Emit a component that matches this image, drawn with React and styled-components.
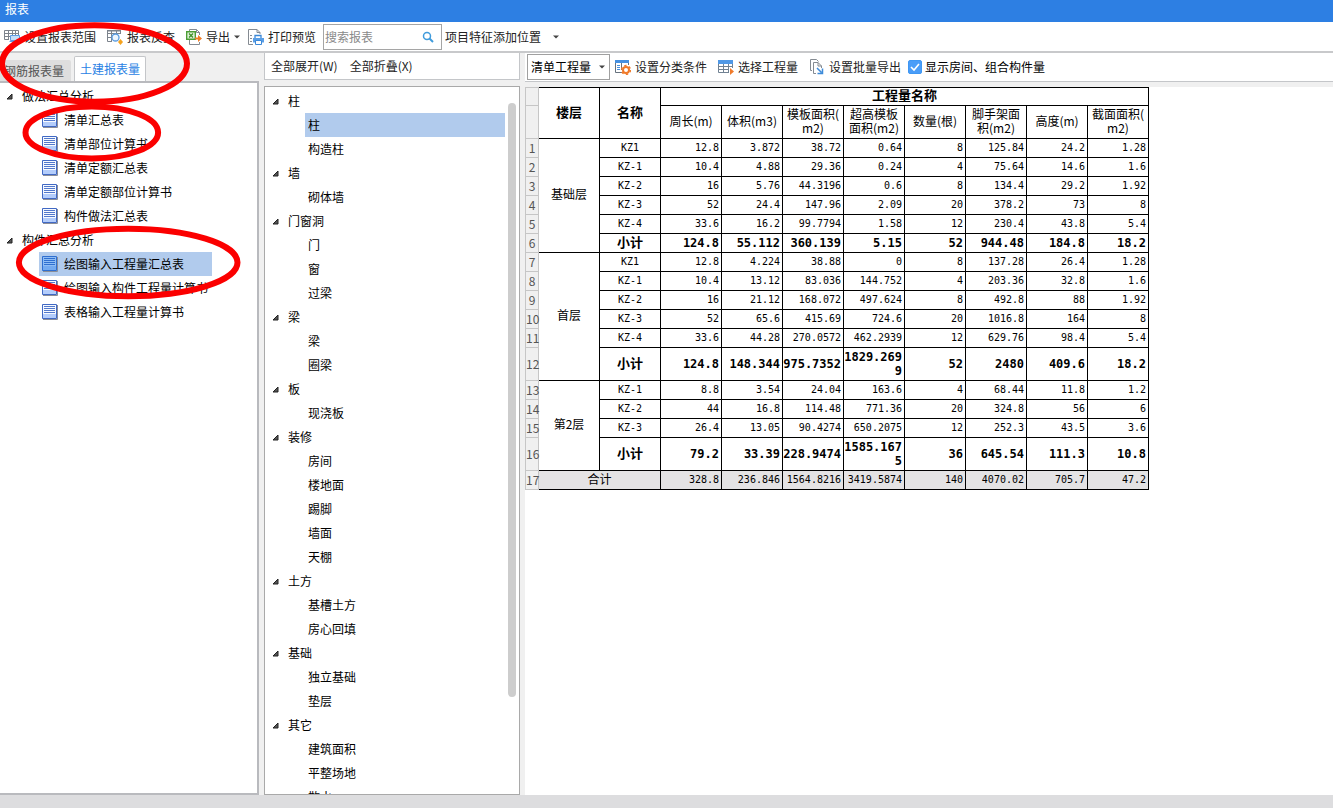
import React, { useState } from 'react'
import styled, { createGlobalStyle } from 'styled-components'

const reportTree = [
  { title: '做法汇总分析', items: ['清单汇总表', '清单部位计算书', '清单定额汇总表', '清单定额部位计算书', '构件做法汇总表'] },
  { title: '构件汇总分析', items: ['绘图输入工程量汇总表', '绘图输入构件工程量计算书', '表格输入工程量计算书'] },
]

const partTree = [
  { title: '柱', items: ['柱', '构造柱'] },
  { title: '墙', items: ['砌体墙'] },
  { title: '门窗洞', items: ['门', '窗', '过梁'] },
  { title: '梁', items: ['梁', '圈梁'] },
  { title: '板', items: ['现浇板'] },
  { title: '装修', items: ['房间', '楼地面', '踢脚', '墙面', '天棚'] },
  { title: '土方', items: ['基槽土方', '房心回填'] },
  { title: '基础', items: ['独立基础', '垫层'] },
  { title: '其它', items: ['建筑面积', '平整场地', '散水'] },
]

const columns = ['周长(m)', '体积(m3)', '模板面积(\nm2)', '超高模板\n面积(m2)', '数量(根)', '脚手架面\n积(m2)', '高度(m)', '截面面积(\nm2)']

const floors = [
  {
    name: '基础层',
    rows: [
      ['KZ1', '12.8', '3.872', '38.72', '0.64', '8', '125.84', '24.2', '1.28'],
      ['KZ-1', '10.4', '4.88', '29.36', '0.24', '4', '75.64', '14.6', '1.6'],
      ['KZ-2', '16', '5.76', '44.3196', '0.6', '8', '134.4', '29.2', '1.92'],
      ['KZ-3', '52', '24.4', '147.96', '2.09', '20', '378.2', '73', '8'],
      ['KZ-4', '33.6', '16.2', '99.7794', '1.58', '12', '230.4', '43.8', '5.4'],
      ['小计', '124.8', '55.112', '360.139', '5.15', '52', '944.48', '184.8', '18.2'],
    ],
  },
  {
    name: '首层',
    rows: [
      ['KZ1', '12.8', '4.224', '38.88', '0', '8', '137.28', '26.4', '1.28'],
      ['KZ-1', '10.4', '13.12', '83.036', '144.752', '4', '203.36', '32.8', '1.6'],
      ['KZ-2', '16', '21.12', '168.072', '497.624', '8', '492.8', '88', '1.92'],
      ['KZ-3', '52', '65.6', '415.69', '724.6', '20', '1016.8', '164', '8'],
      ['KZ-4', '33.6', '44.28', '270.0572', '462.2939', '12', '629.76', '98.4', '5.4'],
      ['小计', '124.8', '148.344', '975.7352', '1829.2699', '52', '2480', '409.6', '18.2'],
    ],
  },
  {
    name: '第2层',
    rows: [
      ['KZ-1', '8.8', '3.54', '24.04', '163.6', '4', '68.44', '11.8', '1.2'],
      ['KZ-2', '44', '16.8', '114.48', '771.36', '20', '324.8', '56', '6'],
      ['KZ-3', '26.4', '13.05', '90.4274', '650.2075', '12', '252.3', '43.5', '3.6'],
      ['小计', '79.2', '33.39', '228.9474', '1585.1675', '36', '645.54', '111.3', '10.8'],
    ],
  },
]

const totals = ['328.8', '236.846', '1564.8216', '3419.5874', '140', '4070.02', '705.7', '47.2']

/* ICONS */
const RangeIcon = () => (
  <Icon viewBox="0 0 16 16">
    <path d="M5 10.5H.5v-9h14V6M0 4.5h15M0 7.5h6M4.5 1v9.5M8.5 1v5M11.500 1v5" fill="none" stroke="#7c838c" />
    <path d="M6.500 6.500h9v5h-9z" fill="#c6def8" stroke="#5d9de4" />
    <path d="M5.500 12.500h9" stroke="#5d9de4" />
  </Icon>
)
const LookupIcon = () => (
  <Icon viewBox="0 0 16 16">
    <path d="M5 12.5H.5V1.500h13V5M.5 4.500h13M.5 8.500h4M4.500 1v11.500M9.500 1v4" fill="none" stroke="#7c838c" />
    <path d="M0 1h14v1.500H0z" fill="#7c838c" />
    <circle cx="8.500" cy="8.500" r="3.500" fill="#eef6ff" stroke="#5a9ce0" strokeWidth="1.300" />
    <path d="M13.500 10l2.500 3-2.500 3-2.500-3z" fill="#f5a21d" />
  </Icon>
)
const ExportIcon = () => (
  <Icon viewBox="0 0 16 16">
    <path d="M3.500 3V.5h7l3 3V6M3.500 11v4.500h10V13" fill="none" stroke="#858b92" />
    <path d="M10.500.5v3h3" fill="none" stroke="#858b92" />
    <path d="M.7 2.700h8.600v7.600H.7z" fill="#e5f3df" stroke="#4c9d35" strokeWidth="1.400" />
    <path d="M3 4.500l4 4M7 4.500l-4 4" stroke="#3f9229" strokeWidth="1.400" />
    <path d="M9 8.500h3V6l4 3.500-4 3.500v-2.500H9z" fill="#f07c25" />
  </Icon>
)
const PrintIcon = () => (
  <Icon viewBox="0 0 16 16">
    <path d="M5 15.500H.5V.5H9l3 3V5M9 .5v3h3" fill="none" stroke="#858b92" />
    <path d="M2 6.500h2M2 9.500h2M2 12.500h2" stroke="#858b92" />
    <path d="M7 9V6.500h6V9" fill="#fff" stroke="#3b88d8" strokeWidth="1.300" />
    <path d="M5 9h11v4.500H5z" fill="#5b9fe6" />
    <path d="M7.500 11.500h6v4h-6z" fill="#fff" stroke="#3b88d8" />
  </Icon>
)
const ClassifyIcon = () => (
  <Icon viewBox="0 0 16 16">
    <path d="M7 13.500H.5V1.500h13V6M6.500 4v7" fill="none" stroke="#67727e" />
    <path d="M0 1h14v3H0z" fill="#4690e0" />
    <path d="M2 6.500h3M2 8.500h3M2 10.500h3" stroke="#4690e0" />
    <circle cx="11" cy="11" r="3" fill="#fff" stroke="#f07a2a" strokeWidth="2" />
    <circle cx="11" cy="11" r="4.500" fill="none" stroke="#f07a2a" strokeWidth="1.400" strokeDasharray="2.360 2.360" />
  </Icon>
)
const GridIcon = () => (
  <Icon viewBox="0 0 16 16">
    <path d="M.5 3.500h14v10H.5zM.5 7.500h14M.5 10.500h14M5.500 4v9.500M10.500 4v9.500" fill="#fff" stroke="#718293" />
    <path d="M0 1h15v4H0z" fill="#4f98e6" />
    <path d="M11 9h5v7h-5z" fill="#fff" />
    <path d="M12 9l4 3.500-4 3.500z" fill="#f07a2a" />
  </Icon>
)
const BatchIcon = () => (
  <Icon viewBox="0 0 16 16">
    <path d="M3 11.500H1.500V.5h6l2 2" fill="none" stroke="#858b92" />
    <path d="M7 14.500H4.500v-11H9l3.500 3.500v2" fill="none" stroke="#858b92" />
    <path d="M9 3.500V7h3.500" fill="none" stroke="#858b92" />
    <path d="M8 9l4.500 4.500M13.500 9.500v5h-5" fill="none" stroke="#3c8ad9" strokeWidth="1.500" />
  </Icon>
)
const SheetIcon = ({ active }) => (
  <Icon viewBox="0 0 16 16">
    <path d="M1 15.500h14.500V1" fill="none" stroke="#8b8e98" />
    <path d="M.5.5h14v14H.5z" fill={active ? '#8fbdf4' : '#f7faff'} stroke={active ? '#2f6fd0' : '#4169c4'} />
    <path d="M1 10h13v4H1z" fill={active ? '#74aaf0' : '#b4cdfb'} />
    <path d="M2 2.500h11M2 4.500h11M2 6.500h11M2 8.500h11" stroke={active ? '#2f6fd0' : '#5379cc'} />
  </Icon>
)
const Caret = () => (
  <CaretIcon viewBox="0 0 6 4"><path d="M0 .5h6L3 3.500z" fill="#444" /></CaretIcon>
)
const Fold = () => (
  <FoldIcon viewBox="0 0 7 7"><path d="M6 1v5H1z" fill="#555" stroke="#222" /></FoldIcon>
)

const Tree = ({ data, selected, onSelect, withIcon }) => (
  <TreeList $fit={withIcon}>
    {data.map((group) => (
      <li key={group.title}>
        <GroupRow $inset={withIcon ? 6 : 7}><Fold />{group.title}</GroupRow>
        <ItemList $indent={withIcon ? 39 : 40}>
          {group.items.map((item) => (
            <li key={item}>
              <ItemRow $active={selected === item} onClick={() => onSelect(item)}>
                {withIcon && <SheetIcon active={selected === item} />}
                {item}
              </ItemRow>
            </li>
          ))}
        </ItemList>
      </li>
    ))}
  </TreeList>
)

const QuantityTable = () => {
  let count = 0
  return (
    <Table>
      <colgroup>
        <Col $w={14} />
        <Col $w={61} />
        <Col $w={61} />
        {columns.map((c) => <Col key={c} $w={61} />)}
      </colgroup>
      <thead>
        <Row>
          <RowNo $top />
          <HeadCell $top $strong rowSpan={2}>楼层</HeadCell>
          <HeadCell $top $strong rowSpan={2}>名称</HeadCell>
          <HeadCell $top $strong colSpan={8}>工程量名称</HeadCell>
        </Row>
        <Row $tall>
          <RowNo />
          {columns.map((c) => <HeadCell key={c}>{c}</HeadCell>)}
        </Row>
      </thead>
      <tbody>
        {floors.map((floor) => floor.rows.map(([name, ...values], i) => {
          const bold = name === '小计'
          count += 1
          return (
            <Row key={floor.name + name} $tall={values.some((v) => bold && v.length > 8)}>
              <RowNo>{count}</RowNo>
              {i === 0 && <LabelCell rowSpan={floor.rows.length}>{floor.name}</LabelCell>}
              {bold ? <LabelCell $bold>{name}</LabelCell> : <CodeCell>{name}</CodeCell>}
              {values.map((v, n) => <NumCell key={n} $bold={bold}>{v}</NumCell>)}
            </Row>
          )
        }))}
        <Row $total>
          <RowNo>{count + 1}</RowNo>
          <LabelCell colSpan={2}>合计</LabelCell>
          {totals.map((v, n) => <NumCell key={n}>{v}</NumCell>)}
        </Row>
      </tbody>
    </Table>
  )
}

const App = () => {
  const [report, setReport] = useState('绘图输入工程量汇总表')
  const [part, setPart] = useState('柱')
  const [tab, setTab] = useState('土建报表量')
  const [showRooms, setShowRooms] = useState(true)

  return (
    <Window>
      <GlobalStyle />
      <TitleBar>报表</TitleBar>
      <MainToolbar>
        <ToolButton><RangeIcon />设置报表范围</ToolButton>
        <ToolButton><LookupIcon />报表反查</ToolButton>
        <ToolButton $menu><ExportIcon />导出<Caret /></ToolButton>
        <ToolButton><PrintIcon />打印预览</ToolButton>
        <SearchBox>
          <input type="text" placeholder="搜索报表" aria-label="搜索报表" />
          <SearchIcon viewBox="0 0 12 12">
            <circle cx="5" cy="5" r="3.500" fill="none" stroke="#3f9bdc" strokeWidth="1.500" />
            <path d="M7.500 7.500l3.500 3.500" stroke="#3f9bdc" strokeWidth="2" />
          </SearchIcon>
        </SearchBox>
        <ToolButton $wide>项目特征添加位置<Caret /></ToolButton>
      </MainToolbar>

      <Body>
        <Side>
          <Tabs>
            {['钢筋报表量', '土建报表量'].map((t) => (
              <Tab key={t} $active={tab === t} onClick={() => setTab(t)}>{t}</Tab>
            ))}
          </Tabs>
          <ReportPanel>
            <Tree data={reportTree} selected={report} onSelect={setReport} withIcon />
          </ReportPanel>
        </Side>

        <Middle>
          <FoldBar>
            <FoldButton>全部展开(W)</FoldButton>
            <FoldButton>全部折叠(X)</FoldButton>
          </FoldBar>
          <PartPanel>
            <Tree data={partTree} selected={part} onSelect={setPart} />
            <ScrollTrack><ScrollThumb /></ScrollTrack>
          </PartPanel>
        </Middle>

        <Content>
          <TableToolbar>
            <SelectBox>
              <select aria-label="工程量类型" defaultValue="清单工程量">
                <option>清单工程量</option>
              </select>
              <Caret />
            </SelectBox>
            <ToolButton><ClassifyIcon />设置分类条件</ToolButton>
            <ToolButton><GridIcon />选择工程量</ToolButton>
            <ToolButton><BatchIcon />设置批量导出</ToolButton>
            <CheckLabel>
              <input type="checkbox" checked={showRooms} onChange={(e) => setShowRooms(e.target.checked)} />
              显示房间、组合构件量
            </CheckLabel>
          </TableToolbar>
          <Sheet><QuantityTable /></Sheet>
        </Content>
      </Body>
      <StatusBar />

      <Marks viewBox="0 0 260 310">
        <ellipse cx="94.500" cy="63.500" rx="92.500" ry="38.300" />
        <ellipse cx="91.800" cy="132.400" rx="66.300" ry="26" />
        <ellipse cx="128.200" cy="262.500" rx="109.300" ry="33.700" />
      </Marks>
    </Window>
  )
}

export default App

const GlobalStyle = createGlobalStyle`
*{
  box-sizing: border-box;
}
body{
  margin: 0;
  font-family: "Noto Sans CJK SC", sans-serif;
  font-size: 12px;
  line-height: 16px;
  color: #000;
}
button, input, select{
  font: inherit;
  color: inherit;
}
ul{
  list-style: none;
  margin: 0;
  padding: 0;
}
`

const Window = styled.div`
  position: relative;
  display: flex;
  flex-direction: column;
  height: 100vh;
  overflow: hidden;
  background: #f0f0f0;
`

const TitleBar = styled.header`
  flex: none;
  height: 22px;
  padding: 0 5px;
  line-height: 17px;
  background: #2d7fe3;
  color: #fff;
`

const Icon = styled.svg`
  flex: none;
  width: 16px;
  height: 16px;
`

const CaretIcon = styled.svg`
  flex: none;
  width: 6px;
  height: 4px;
`

const FoldIcon = styled.svg`
  flex: none;
  width: 7px;
  height: 7px;
`

const MainToolbar = styled.div`
  flex: none;
  display: flex;
  align-items: center;
  height: 31px;
  border-bottom: 2px solid #c8c9cb;
  background: #fff;
`

const ToolButton = styled.button`
  display: flex;
  align-items: center;
  gap: ${({ $wide }) => ($wide ? 12 : 4)}px;
  height: 22px;
  padding: 0 ${({ $menu, $wide }) => ($menu || $wide ? 4 : 7)}px 0 ${({ $wide }) => ($wide ? 3 : 4)}px;
  border: none;
  background: none;
  color: #222;
  white-space: nowrap;
  cursor: pointer;
`

const SearchBox = styled.div`
  display: flex;
  align-items: center;
  width: 119px;
  height: 26px;
  padding: 0 7px 0 1px;
  border: 1px solid #a5a5a5;
  background: #fff;
  input{
    flex: 1;
    min-width: 0;
    padding: 0;
    border: none;
    outline: none;
  }
  input::placeholder{
    color: #8a8a8a;
  }
`

const SearchIcon = styled.svg`
  flex: none;
  width: 12px;
  height: 12px;
`

const Body = styled.main`
  flex: 1;
  min-height: 0;
  display: grid;
  grid-template-columns: 259px 256px 1fr;
  grid-template-rows: 100%;
  column-gap: 5px;
`

const Side = styled.section`
  display: flex;
  flex-direction: column;
`

const Tabs = styled.div`
  display: flex;
  align-items: flex-end;
  gap: 3px;
  height: 28px;
`

const Tab = styled.button`
  height: ${({ $active }) => ($active ? 25 : 21)}px;
  padding: 0 ${({ $active }) => ($active ? 5 : 7)}px 0 ${({ $active }) => ($active ? 5 : 4)}px;
  border: ${({ $active }) => ($active ? '1px solid #c4c6c9' : 'none')};
  border-bottom: none;
  border-radius: 2px 2px 0 0;
  background: ${({ $active }) => ($active ? '#fff' : '#dedede')};
  color: ${({ $active }) => ($active ? '#2a82e4' : '#555')};
  cursor: pointer;
`

const ReportPanel = styled.div`
  flex: 1;
  min-height: 0;
  padding-top: 1px;
  overflow: hidden;
  border: 2px solid #b9babe;
  border-left: none;
  background: #fff;
`

const TreeList = styled.ul`
  flex: 1;
  width: ${({ $fit }) => ($fit ? 'max-content' : 'auto')};
`

const GroupRow = styled.div`
  display: flex;
  align-items: center;
  gap: 9px;
  height: 24px;
  padding-left: ${({ $inset }) => $inset}px;
`

const ItemList = styled.ul`
  padding-left: ${({ $indent }) => $indent}px;
`

const ItemRow = styled.button`
  display: flex;
  align-items: center;
  gap: 6px;
  width: 100%;
  height: 24px;
  padding: 0 4px 0 3px;
  border: none;
  background: ${({ $active }) => ($active ? '#b1cbed' : 'none')};
  text-align: left;
  white-space: nowrap;
  cursor: pointer;
`

const Middle = styled.section`
  display: flex;
  flex-direction: column;
  gap: 6px;
  min-height: 0;
`

const FoldBar = styled.div`
  flex: none;
  display: flex;
  align-items: center;
  gap: 4px;
  height: 27px;
  padding: 0 2px;
  border: 1px solid #c4c6c9;
  border-top: none;
  background: #fff;
`

const FoldButton = styled.button`
  height: 20px;
  padding: 0 4px;
  border: none;
  background: none;
  color: #222;
  cursor: pointer;
`

const PartPanel = styled.div`
  flex: 1;
  min-height: 0;
  display: flex;
  gap: 3px;
  padding: 2px 3px 0 0;
  overflow: hidden;
  border: 1px solid #a9a9a9;
  background: #fff;
`

const ScrollTrack = styled.div`
  width: 8px;
  padding-top: 14px;
`

const ScrollThumb = styled.div`
  height: 86%;
  border-radius: 4px;
  background: #cdcdcd;
`

const Content = styled.section`
  display: flex;
  flex-direction: column;
  gap: 5px;
  min-width: 0;
`

const TableToolbar = styled.div`
  flex: none;
  display: flex;
  align-items: center;
  height: 29px;
  padding-left: 2px;
  border-bottom: 1px solid #c4c6c9;
  background: #fff;
`

const SelectBox = styled.div`
  position: relative;
  width: 83px;
  height: 26px;
  margin-right: 1px;
  select{
    width: 100%;
    height: 100%;
    padding: 0 16px 0 3px;
    border: 1px solid #a0a0a0;
    border-radius: 0;
    background: #fff;
    appearance: none;
  }
  svg{
    position: absolute;
    right: 5px;
    top: 11px;
    pointer-events: none;
  }
`

const CheckLabel = styled.label`
  display: flex;
  align-items: center;
  gap: 3px;
  white-space: nowrap;
  input{
    appearance: none;
    width: 14px;
    height: 14px;
    margin: 0;
    border-radius: 2px;
    border: 1px solid #3f97f3;
  }
  input:checked{
    background: #4a9df8 url("data:image/svg+xml,%3Csvg xmlns='http://www.w3.org/2000/svg' viewBox='0 0 12 12'%3E%3Cpath d='M2 6l3 3 5-6' fill='none' stroke='white' stroke-width='1.6'/%3E%3C/svg%3E") center / 12px no-repeat;
  }
`

const Sheet = styled.div`
  flex: 1;
  min-height: 0;
  overflow: hidden;
  background: #fff;
`

const Table = styled.table`
  width: 624px;
  table-layout: fixed;
  border-collapse: separate;
  border-spacing: 0;
`

const Col = styled.col`
  width: ${({ $w }) => $w}px;
`

const Row = styled.tr`
  height: ${({ $tall }) => ($tall ? 33 : 19)}px;
  td{
    background: ${({ $total }) => ($total ? '#e4e3e4' : 'none')};
  }
`

const Cell = styled.td`
  padding: 0;
  border: solid #000;
  border-width: ${({ $top }) => ($top ? 1 : 0)}px 1px 1px 0;
  line-height: 14px;
  text-align: center;
  font-weight: ${({ $bold }) => ($bold ? 700 : 400)};
`

const HeadCell = styled(Cell).attrs({ as: 'th' })`
  padding-bottom: 3px;
  font-size: ${({ $strong }) => ($strong ? 13 : 12)}px;
  font-weight: ${({ $strong }) => ($strong ? 700 : 400)};
  white-space: pre-line;
`

const LabelCell = styled(Cell)`
  padding-bottom: 3px;
  font-size: ${({ $bold }) => ($bold ? 13 : 12)}px;
`

const CodeCell = styled(Cell)`
  font-family: "DejaVu Sans Mono", monospace;
  font-size: 10px;
`

const NumCell = styled(Cell)`
  padding-right: 2px;
  font-family: "DejaVu Sans Mono", monospace;
  font-size: ${({ $bold }) => ($bold ? 12 : 10)}px;
  text-align: right;
  word-break: break-all;
`

const RowNo = styled.th`
  padding: 0;
  border: solid #c6c6c6;
  border-width: ${({ $top }) => ($top ? 1 : 0)}px 1px 1px 1px;
  background: #f0f0f0;
  color: #555;
  font-family: "Noto Sans CJK SC", sans-serif;
  font-weight: 400;
  line-height: 16px;
`

const StatusBar = styled.footer`
  flex: none;
  height: 13px;
  background: #dddddf;
`

/* hand-drawn red circles laid over the page */
const Marks = styled.svg`
  position: absolute;
  left: 0;
  top: 0;
  width: 260px;
  height: 310px;
  pointer-events: none;
  ellipse{
    fill: none;
    stroke: #fb0000;
    stroke-width: 6;
  }
`
